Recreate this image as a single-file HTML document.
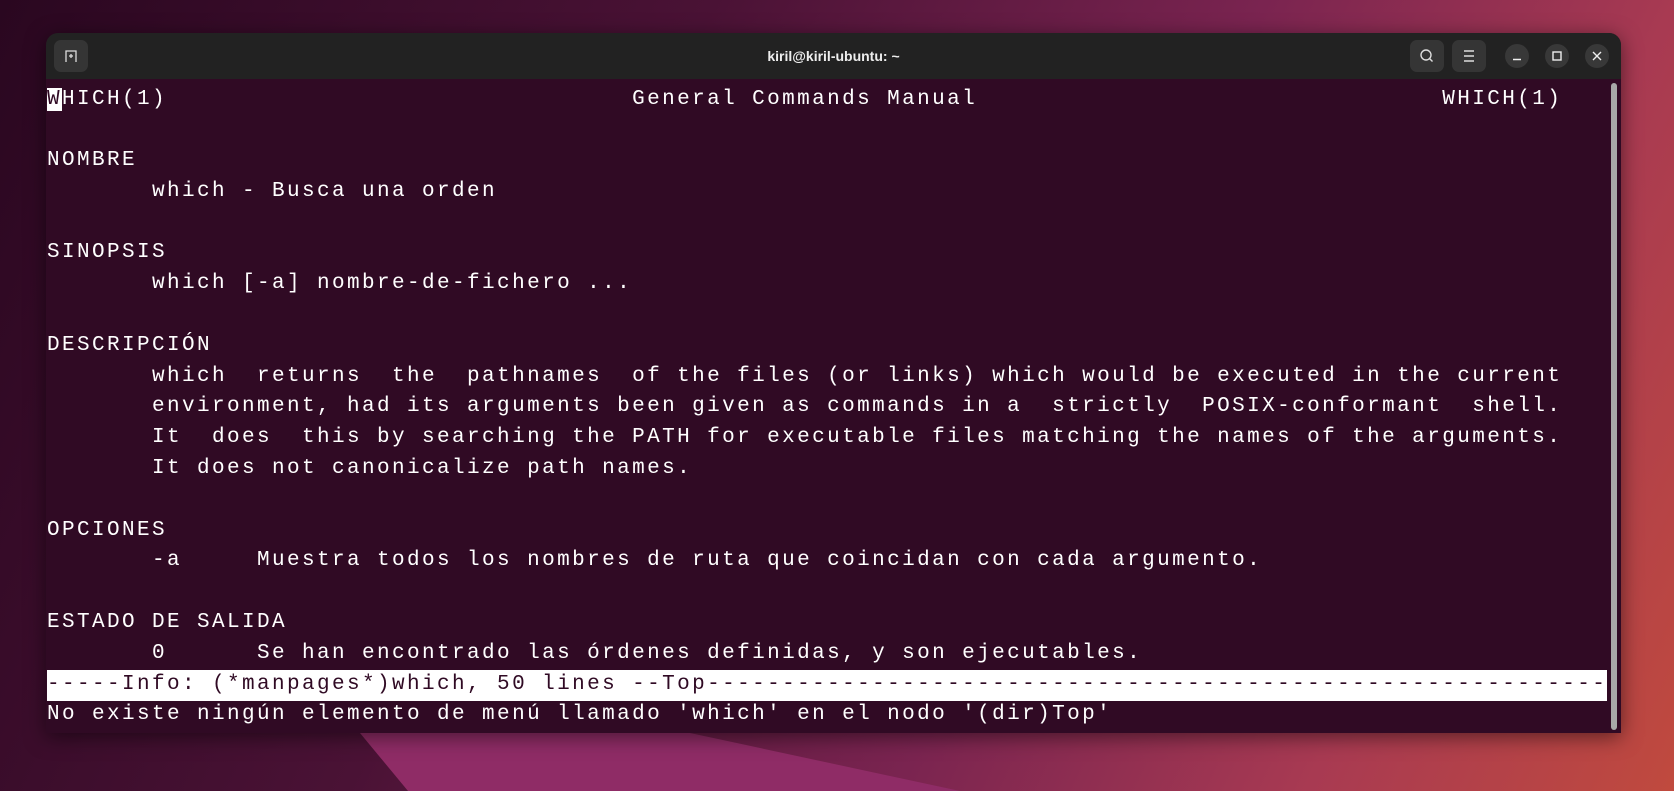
<!DOCTYPE html>
<html><head><meta charset="utf-8"><style>
html,body{margin:0;padding:0;width:1674px;height:791px;overflow:hidden}
body{position:relative;background:linear-gradient(115deg,#2a0720 0%,#4a1235 35%,#7a2450 62%,#a83a52 82%,#c04a3e 100%)}
.shape2{position:absolute;left:360px;top:733px;width:600px;height:58px;background:#8f2c66;clip-path:polygon(0 0,55% 0,100% 100%,8% 100%)}
.win{position:absolute;left:46px;top:33px;width:1575px;height:700px;background:#300a24;border-radius:12px 12px 0 0;box-shadow:0 4px 20px rgba(0,0,0,.5);overflow:hidden}
.tb{position:absolute;left:0;top:0;width:100%;height:46px;background:#222222}
.title{position:absolute;left:0;right:0;top:0;height:46px;text-align:center;color:#eee;font-family:"Liberation Sans",sans-serif;font-weight:bold;font-size:14px;line-height:46px}
.btn{position:absolute;top:7px;width:34px;height:32px;background:#353535;border-radius:7px}
.circ{position:absolute;top:11px;width:24px;height:24px;background:#383838;border-radius:50%}
pre{position:absolute;left:1px;top:51.5px;margin:0;font-family:"Liberation Mono",monospace;font-size:21px;letter-spacing:2.4px;line-height:30.8px;color:#fff;white-space:pre}
.bar{position:absolute;left:1px;top:637px;width:1560px;height:31px;background:#fff}
.cur{background:#fff;color:#300a24}
.sb{position:absolute;left:1565px;top:50px;width:6px;height:647px;background:#a8a8a8;border-radius:3px}
</style></head><body>
<div class="shape2"></div>
<div class="win">
<div class="tb"></div>
<div class="btn" style="left:8px"><svg width="34" height="32" viewBox="0 0 34 32"><path d="M12 22V11h10v11M15 16h4M17 14v4" stroke="#ddd" stroke-width="1.3" fill="none"/></svg></div>
<div class="title">kiril@kiril-ubuntu: ~</div>
<div class="btn" style="left:1364px"><svg width="34" height="32" viewBox="0 0 34 32"><circle cx="16" cy="15" r="5" stroke="#ddd" stroke-width="1.4" fill="none"/><path d="M19.5 18.5l3 3" stroke="#ddd" stroke-width="1.4"/></svg></div>
<div class="btn" style="left:1406px"><svg width="34" height="32" viewBox="0 0 34 32"><path d="M12 11h10M12 16h10M12 21h10" stroke="#ddd" stroke-width="1.4"/></svg></div>
<div class="circ" style="left:1459px"><svg width="24" height="24"><path d="M8 15.5h8" stroke="#eee" stroke-width="1.5"/></svg></div>
<div class="circ" style="left:1499px"><svg width="24" height="24"><rect x="8" y="8" width="8" height="8" stroke="#eee" stroke-width="1.4" fill="none"/></svg></div>
<div class="circ" style="left:1539px"><svg width="24" height="24"><path d="M8 8l8 8M16 8l-8 8" stroke="#eee" stroke-width="1.4"/></svg></div>
<div class="bar"></div>
<div class="sb"></div>
<pre><span class="cur">W</span>HICH(1)                               General Commands Manual                               WHICH(1)

NOMBRE
       which - Busca una orden

SINOPSIS
       which [-a] nombre-de-fichero ...

DESCRIPCIÓN
       which  returns  the  pathnames  of the files (or links) which would be executed in the current
       environment, had its arguments been given as commands in a  strictly  POSIX-conformant  shell.
       It  does  this by searching the PATH for executable files matching the names of the arguments.
       It does not canonicalize path names.

OPCIONES
       -a     Muestra todos los nombres de ruta que coincidan con cada argumento.

ESTADO DE SALIDA
       0      Se han encontrado las órdenes definidas, y son ejecutables.
<span style="color:#300a24">-----Info: (*manpages*)which, 50 lines --Top------------------------------------------------------------</span>
No existe ningún elemento de menú llamado 'which' en el nodo '(dir)Top'</pre>
</div>
</body></html>
